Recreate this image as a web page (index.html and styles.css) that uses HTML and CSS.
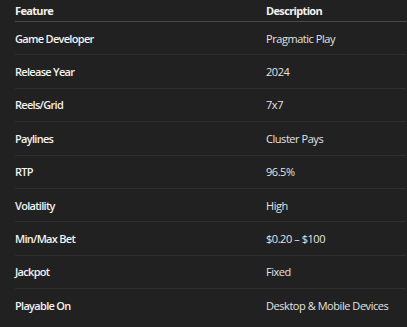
FILE: index.html
```html
<!DOCTYPE html>
<html>
<head>
<meta charset="utf-8">
<link rel="stylesheet" href="styles.css">
</head>
<body>
<table class="spec">
  <thead>
    <tr><th>Feature</th><th>Description</th></tr>
  </thead>
  <tbody>
    <tr><td class="key">Game Developer</td><td>Pragmatic Play</td></tr>
    <tr><td class="key">Release Year</td><td>2024</td></tr>
    <tr><td class="key">Reels/Grid</td><td>7x7</td></tr>
    <tr><td class="key">Paylines</td><td>Cluster Pays</td></tr>
    <tr><td class="key">RTP</td><td>96.5%</td></tr>
    <tr><td class="key">Volatility</td><td>High</td></tr>
    <tr><td class="key">Min/Max Bet</td><td>$0.20 – $100</td></tr>
    <tr><td class="key">Jackpot</td><td>Fixed</td></tr>
    <tr><td class="key">Playable On</td><td>Desktop &amp; Mobile Devices</td></tr>
  </tbody>
</table>
</body>
</html>
```
FILE: styles.css
```css
html, body {
  margin: 0;
  padding: 0;
  background: #212121;
}
body {
  padding: 0 1px 0 15px;
  font-family: "Open Sans", "Noto Sans", sans-serif;
  font-size: 11px;
  letter-spacing: -0.45px;
  color: #e3e3e3;
}
.spec {
  width: 100%;
  border-collapse: collapse;
}
.spec th {
  text-align: left;
  font-weight: 700;
  letter-spacing: -0.65px;
  color: #f2f2f2;
  height: 21px;
  padding: 0;
  vertical-align: middle;
  white-space: nowrap;
  border-bottom: 1px solid #4a4a4a;
}
.spec td {
  height: 32.4px;
  padding: 0;
  vertical-align: middle;
  white-space: nowrap;
  border-bottom: 1px solid #2e2e2e;
}
.spec tbody tr:last-child td {
  border-bottom: none;
}
.spec th:first-child, .spec td:first-child {
  width: 251px;
}
.spec td.key {
  font-weight: 600;
  color: #f2f2f2;
  letter-spacing: -0.7px;
}
```
